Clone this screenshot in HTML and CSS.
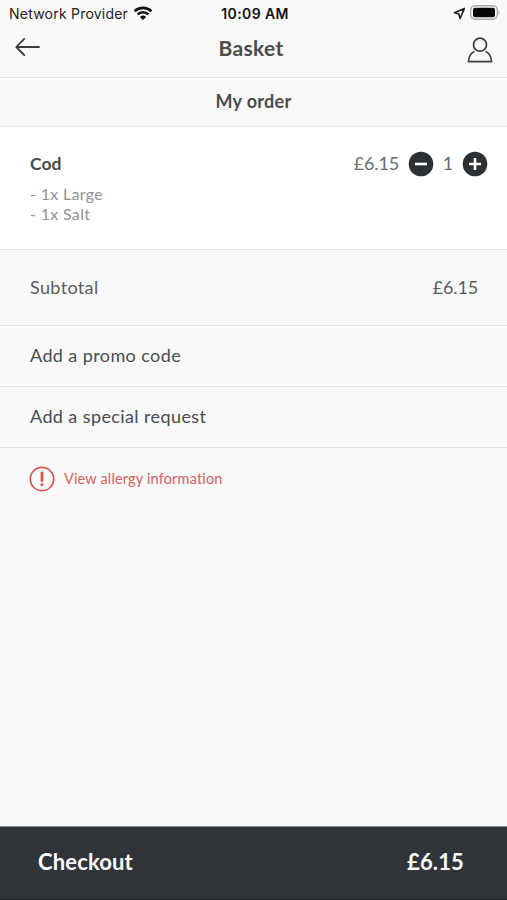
FILE: index.html
```html
<!DOCTYPE html>
<html lang="en">
<head>
<meta charset="utf-8">
<title>Basket</title>
<link rel="stylesheet" href="styles.css">
</head>
<body>
<div class="screen">
  <div class="status">
    <div class="status-left"><span class="carrier">Network Provider</span>
      <svg width="20" height="15" viewBox="0 0 20 15" fill="none" stroke="#111" stroke-width="2.6"><path d="M1.6 5.2C6.3.8 13.7.8 18.4 5.2"/><path d="M4.6 8.4C7.7 5.5 12.3 5.5 15.4 8.4"/><path d="M10 14 6.9 10.9Q10 8.3 13.1 10.9Z" fill="#111" stroke="none"/></svg>
    </div>
    <span class="time">10:09 AM</span>
    <div class="status-right">
      <svg width="13" height="13" viewBox="0 0 13 13" fill="none" stroke="#222" stroke-width="1.6" stroke-linejoin="round"><path d="M11.4 1.4 1.3 5.8 5.8 6.9 7.1 11.5Z"/></svg>
      <svg width="31" height="16" viewBox="0 0 31 16"><rect x=".7" y=".7" width="26.6" height="13.6" rx="4.5" fill="#f9f9f9" stroke="#aaa" stroke-width="1.4"/><rect x="3" y="2.8" width="22" height="9.4" rx="2" fill="#050505"/><path d="M28.5 5.2Q30.6 7.7 28.5 10.2Z" fill="#aaa"/></svg>
    </div>
  </div>
  <header class="nav">
    <svg class="back" width="26" height="20" viewBox="0 0 26 20" fill="none" stroke="#3a3c3e" stroke-width="1.8" stroke-linecap="round" stroke-linejoin="round"><path d="M24 10H1.8M9.2 1.8 1.3 10l7.9 8"/></svg>
    <h1>Basket</h1>
    <svg class="user" width="26" height="26" viewBox="0 0 26 26" fill="none" stroke="#3a3c3e" stroke-width="1.7" stroke-linecap="round" stroke-linejoin="round"><circle cx="13" cy="7.7" r="6.5"/><path d="M6.8 14.6C3.4 16.8 1.6 20 1.4 24.6H24.6C24.4 20 22.6 16.8 19.2 14.6"/></svg>
  </header>
  <h2 class="section-title"><span>My order</span></h2>
  <section class="item">
    <div class="item-row">
      <strong class="name">Cod</strong>
      <span class="price">£6.15</span>
      <svg class="btn" width="26" height="26" viewBox="0 0 26 26"><circle cx="13" cy="13" r="12.3" fill="#2c3033"/><path d="M7 13H19" stroke="#fff" stroke-width="2.6"/></svg>
      <span class="qty">1</span>
      <svg class="btn" width="26" height="26" viewBox="0 0 26 26"><circle cx="13" cy="13" r="12.3" fill="#2c3033"/><path d="M7 13H19M13 7V19" stroke="#fff" stroke-width="2.6"/></svg>
    </div>
    <ul class="options"><li><span class="large">- 1x Large</span></li><li><span class="salt">- 1x Salt</span></li></ul>
  </section>
  <div class="row subtotal"><span class="label">Subtotal</span><span class="amount">£6.15</span></div>
  <div class="row"><span class="promo">Add a promo code</span></div>
  <div class="row"><span class="request">Add a special request</span></div>
  <div class="allergy">
    <svg width="26" height="26" viewBox="0 0 26 26" fill="none" stroke="#d6534f"><circle cx="13" cy="13" r="11.7" stroke-width="1.7"/><path d="M13 6.8V14.5" stroke-width="2.8" stroke-linecap="round"/><circle cx="13" cy="18.5" r="1.6" fill="#d6534f" stroke="none"/></svg>
    <span>View allergy information</span>
  </div>
  <footer class="checkout"><span class="cta">Checkout</span><span class="total">£6.15</span></footer>
</div>
</body>
</html>
```
FILE: styles.css
```css
* { box-sizing: border-box; }
body { margin: 0; font-family: Lato, "Noto Sans", sans-serif; font-variant-ligatures: none; color: #4a4b4d; background: #f9f9f9; }
svg { display: block; flex: none; }
h1, h2, ul { margin: 0; padding: 0; }
span, strong { white-space: nowrap; }
.screen { width: 507px; height: 900px; display: flex; flex-direction: column; overflow: hidden; }
.status { height: 28px; flex: none; display: grid; grid-template-columns: 1fr auto 1fr; align-items: center; padding: 0 6px 2px 9px; font-family: Inter, sans-serif; font-size: 14px; color: #222; }
.status-left { display: flex; align-items: center; gap: 5px; }
.carrier { letter-spacing: .22px; }
.time { font-weight: 600; color: #111; letter-spacing: .4px; }
.status-right { display: flex; align-items: center; justify-content: flex-end; gap: 4px; }
.nav { height: 50px; flex: none; display: grid; grid-template-columns: 1fr auto 1fr; align-items: center; padding: 0 14px 12px; border-bottom: 1px solid #e4e4e4; }
.nav h1 { font-size: 21px; line-height: 26px; font-weight: 700; letter-spacing: .35px; margin: 2px 5px 0 0; }
.back { margin-left: 1px; }
.user { justify-self: end; margin-top: 6px; }
.section-title { height: 49px; flex: none; display: flex; align-items: center; justify-content: center; padding-bottom: 2px; font-size: 18px; font-weight: 700; letter-spacing: .3px; border-bottom: 1px solid #e8e8e8; }
.item { height: 123px; flex: none; background: #fff; padding: 23px 19px 0 30px; border-bottom: 1px solid #e5e5e5; }
.item-row { display: flex; align-items: center; height: 27px; font-size: 18px; }
.name { flex: 1; font-weight: 700; font-size: 17.5px; }
.price, .qty { color: #6b6c6e; padding-bottom: 1px; }
.price { margin-right: 9px; letter-spacing: -.15px; }
.qty { width: 28px; text-align: center; }
.options { list-style: none; color: #919191; font-size: 16px; line-height: 20px; padding-top: 7px; letter-spacing: .32px; }
.row { height: 61px; flex: none; display: flex; align-items: center; justify-content: space-between; padding: 0 29px 2px 30px; font-size: 18px; border-bottom: 1px solid #e3e3e3; }
.subtotal { height: 76px; color: #5b5c5e; }
.label { letter-spacing: .35px; }
.amount { letter-spacing: -.15px; }
.promo, .request { letter-spacing: .4px; }
.allergy { display: flex; align-items: center; gap: 9px; padding: 18px 29px; color: #d6605d; font-size: 14.5px; letter-spacing: .16px; }
.allergy span { padding-bottom: 1px; }
.checkout { margin-top: auto; height: 74px; display: flex; align-items: center; justify-content: space-between; padding: 0 43px 3px 38px; background: #303438; border-top: 1px solid #8c8e91; border-bottom: 1px solid #292629; color: #fff; font-size: 22px; font-weight: 700; letter-spacing: .15px; }
```
